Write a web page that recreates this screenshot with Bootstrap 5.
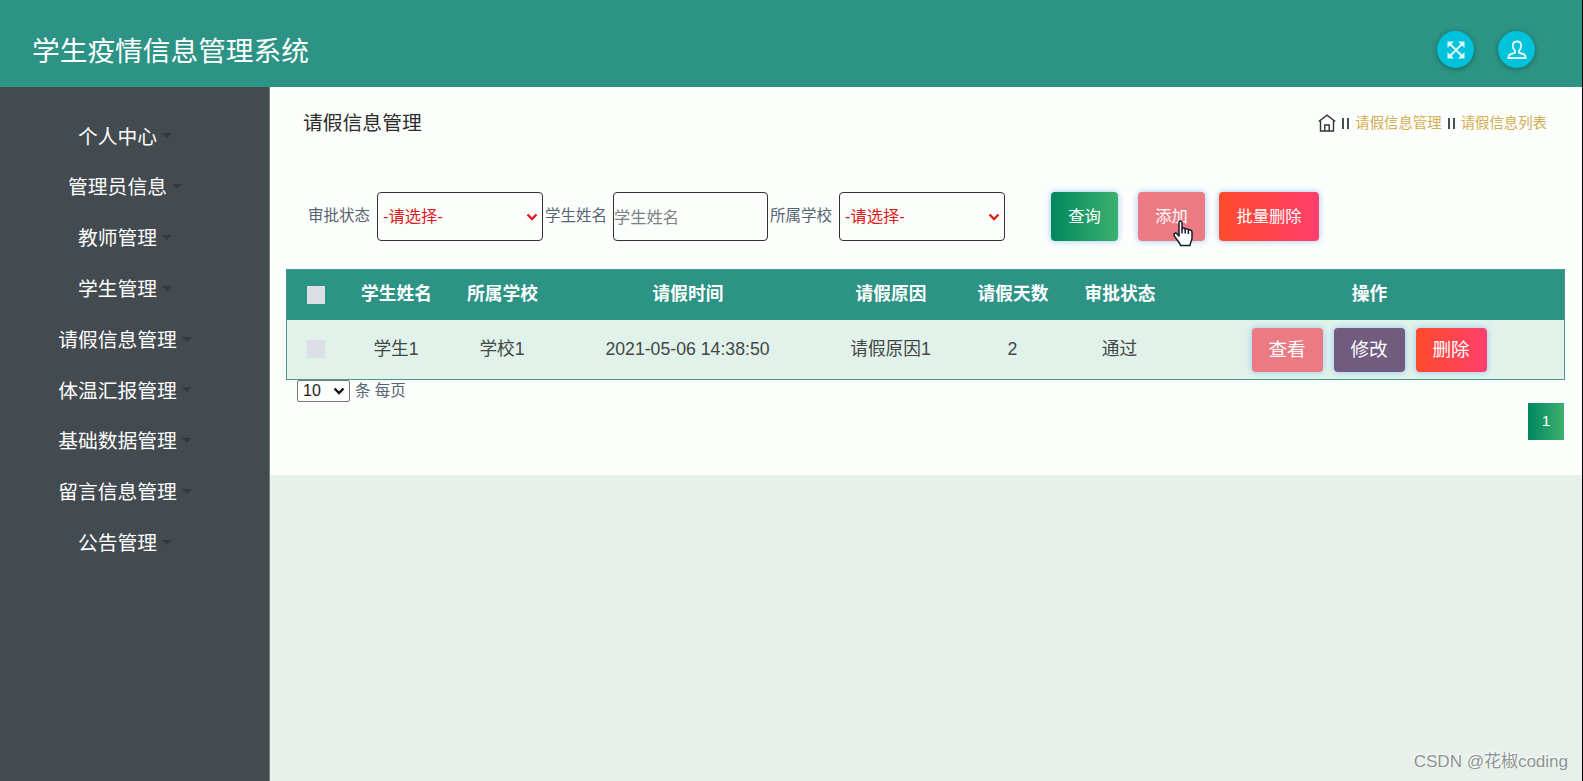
<!DOCTYPE html>
<html lang="zh-CN">
<head>
    <meta charset="UTF-8">
    <title>学生疫情信息管理系统</title>
    <meta name="viewport" content="width=device-width, initial-scale=1.0">
    <link rel="stylesheet" href="https://cdn.jsdelivr.net/npm/bootstrap@5.3.3/dist/css/bootstrap.min.css">
    <style>
        body {
            font-family: "Liberation Sans", "Noto Sans CJK SC", sans-serif;
            font-size: 15.5px;
            line-height: 1.2;
            color: #566472;
            background: #e7f0ea;
            border-right: 1px solid #000;
            height: 781px;
            overflow: hidden;
        }
        .top-bar { height: 87px; background: #2c9385; padding: 12px 47px 0 32px; }
        .site-title { font-size: 27.7px; padding-top: 4px; }
        .round-btn {
            width: 37px;
            height: 37px;
            background: #00c2da;
            box-shadow: 0 1px 5px rgba(0, 0, 0, .35);
        }
        .side-menu {
            width: 270px;
            background: #434a50;
            border-right: 1px solid #777d80;
            padding: 25px 19px 0 0;
        }
        .side-menu a {
            height: 50.8px;
            font-size: 19.8px;
            color: #fff;
            gap: 5px;
        }
        .side-menu a::after {
            content: "";
            border: 5.5px solid transparent;
            border-top-color: #313a39;
            border-bottom: 0;
            margin-top: -3px;
        }
        .panel-box { height: 388px; background: #fcfefb; }
        .head-row { height: 73px; padding: 0 35px 0 33px; }
        .page-name { font-size: 19.8px; color: #2b2b2b; padding-top: 1px; }
        .crumbs { font-size: 14.4px; color: #333; gap: 6px; }
        .crumbs a { color: #d3ae56; }
        .crumbs svg { margin-bottom: 2px; }
        .sep { width: 7px; height: 11px; border: solid #435158; border-width: 0 2px; }
        .search-row { height: 49px; margin: 32px 0 28px 38px; }
        .search-row label { width: 62px; white-space: nowrap; }
        .search-row .field + label { margin-left: 2px; }
        .field {
            height: 49px;
            border: 1.5px solid #333;
            border-radius: 4px;
            font-size: 16.3px;
            background: #fcfefb;
        }
        .pick { width: 166px; padding: 1px 4px 0 5px; margin-left: 7px; color: #dc1b1b; }
        .name-input { width: 155px; padding: 1px 0 0; margin-left: 6px; }
        .name-input::placeholder { color: #7b8083; opacity: 1; }
        .act {
            color: #fff;
            border: 0;
            border-radius: 4px;
            padding: 0;
            box-shadow: 0 0 6px rgba(120, 180, 250, .75);
        }
        .act:hover { color: #fff; }
        .search-row .act { width: 67px; height: 49px; font-size: 16.3px; margin-left: 46px; }
        .search-row .act.add-btn { margin-left: 20px; }
        .search-row .act.act-wide { width: 100px; margin-left: 14px; }
        .green { background: linear-gradient(90deg, #00875f, #3cb06e); }
        .pink { background: #ec7a82; }
        .purple { background: #715c80; }
        .red { background: linear-gradient(90deg, #ff4b2b, #ff3f6c); }
        .leave-table {
            width: 1279px;
            table-layout: fixed;
            margin-left: 16px;
            border: 1px solid #4a978d;
            border-collapse: separate;
            border-spacing: 0;
            text-align: center;
            font-size: 17.7px;
            color: #434746;
        }
        .leave-table th { height: 50px; background: #2c9385; color: #fff; padding: 0 1px 0 0; }
        .leave-table td { height: 59px; background: #e1f2ea; padding: 0 2px 0 0; }
        .leave-table th:first-child, .leave-table td:first-child { padding: 0 0 2px; }
        .tick { width: 18px; height: 18px; background: #dce0e6; }
        .row-act { gap: 11px; }
        .row-act .act { width: 71px; height: 44px; font-size: 18.6px; }
        .per-page { padding-left: 27px; gap: 5px; }
        .page-size {
            width: 53px;
            height: 22px;
            border: 1px solid #777;
            border-radius: 2px;
            font-size: 16px;
            color: #222;
            padding: 0 4px 0 5px;
        }
        .page-no { width: 36px; height: 37px; margin: 1px 18px 0 0; color: #fff; }
        .hand { position: absolute; left: 35px; top: 28px; }
        .watermark {
            position: absolute;
            right: 15px;
            bottom: 9px;
            font-size: 17px;
            color: #8f9392;
            text-shadow: -1px -1px 0 #fff;
        }
    </style>
    <script src="https://cdn.jsdelivr.net/npm/bootstrap@5.3.3/dist/js/bootstrap.bundle.min.js"></script>
</head>
<body class="d-flex flex-column">
<header class="top-bar d-flex align-items-center justify-content-between">
    <div class="site-title text-white">学生疫情信息管理系统</div>
    <div class="d-flex gap-4">
        <a class="round-btn rounded-circle d-flex align-items-center justify-content-center" href="#">
            <svg width="18" height="18" viewBox="0 0 18 18"><path d="M3 3l12 12M15 3L3 15" stroke="#dff8fb" stroke-width="2"/><path d="M.5.5h6.500L5 2.500 2.500 5l-2 2zM17.500.5H11l2 2L15.500 5l2 2zM.5 17.500V11l2 2L5 15.500l2 2zM17.500 17.500V11l-2 2-2.500 2.500-2 2z" fill="#dff8fb"/></svg>
        </a>
        <a class="round-btn rounded-circle d-flex align-items-center justify-content-center" href="#">
            <svg width="20" height="20" viewBox="0 0 20 20" fill="none" stroke="#dff8fb" stroke-width="1.9"><path d="M8 11C6.500 9.500 5.800 7.800 5.800 5.800 5.800 3 7.300 1.500 10 1.500s4.200 1.500 4.200 4.300c0 2-.7 3.700-2.200 5.200v1.600l5 1.900c1.200.5 1.600 1.500 1.700 3.500H1.300c.1-2 .5-3 1.700-3.500l5-1.900z"/></svg>
        </a>
    </div>
</header>
<div class="d-flex flex-grow-1">
    <nav class="side-menu d-flex flex-column flex-shrink-0">
        <a class="d-flex align-items-center justify-content-center text-decoration-none" href="#">个人中心</a>
        <a class="d-flex align-items-center justify-content-center text-decoration-none" href="#">管理员信息</a>
        <a class="d-flex align-items-center justify-content-center text-decoration-none" href="#">教师管理</a>
        <a class="d-flex align-items-center justify-content-center text-decoration-none" href="#">学生管理</a>
        <a class="d-flex align-items-center justify-content-center text-decoration-none" href="#">请假信息管理</a>
        <a class="d-flex align-items-center justify-content-center text-decoration-none" href="#">体温汇报管理</a>
        <a class="d-flex align-items-center justify-content-center text-decoration-none" href="#">基础数据管理</a>
        <a class="d-flex align-items-center justify-content-center text-decoration-none" href="#">留言信息管理</a>
        <a class="d-flex align-items-center justify-content-center text-decoration-none" href="#">公告管理</a>
    </nav>
    <main class="flex-grow-1">
        <div class="panel-box">
            <div class="head-row d-flex align-items-center justify-content-between">
                <div class="page-name">请假信息管理</div>
                <div class="crumbs d-flex align-items-center">
                    <svg width="18" height="18" viewBox="0 0 18 18" fill="none" stroke="#333" stroke-width="1.4"><path d="M.7 7.500L9 1.200l8.300 6.300M2.500 6.200v10.800h13V6.200M6.800 17v-6h4.400v6"/></svg>
                    <span class="sep"></span>
                    <a class="text-decoration-none" href="#">请假信息管理</a>
                    <span class="sep"></span>
                    <a class="text-decoration-none" href="#">请假信息列表</a>
                </div>
            </div>
            <form class="search-row d-flex align-items-center">
                <label>审批状态</label>
                <div class="field pick d-flex align-items-center justify-content-between">
                    <span>-请选择-</span>
                    <svg width="12" height="8" viewBox="0 0 12 8" fill="none" stroke="#e31b1b" stroke-width="2.400"><path d="M1.500 1.500L6 6l4.500-4.500"/></svg>
                </div>
                <label>学生姓名</label>
                <input type="text" class="field name-input" placeholder="学生姓名">
                <label>所属学校</label>
                <div class="field pick d-flex align-items-center justify-content-between">
                    <span>-请选择-</span>
                    <svg width="12" height="8" viewBox="0 0 12 8" fill="none" stroke="#e31b1b" stroke-width="2.400"><path d="M1.500 1.500L6 6l4.500-4.500"/></svg>
                </div>
                <button type="button" class="btn act green">查询</button>
                <button type="button" class="btn act add-btn pink position-relative">添加
                    <svg class="hand" width="20" height="27" viewBox="0 0 20 27" fill="#fff" stroke="#171a2b" stroke-width="1.500" stroke-linejoin="round"><path d="M6 16V2.500C6 .4 9 .4 9 2.500V9c.3-1.300 3-1.300 3.200.5.600-1.200 3-1 3.200.8.800-1 3.600-.6 3.600 1.700v6c0 3-1.800 4-2 7.500H7.500C7 22 2 18.500 1 15c-.3-2 2-2.500 3.200-1z"/><path d="M9 9v4.500M12.200 9.500v4M15.400 10.500v3.500"/></svg>
                </button>
                <button type="button" class="btn act act-wide red">批量删除</button>
            </form>
            <table class="leave-table">
                <colgroup>
                    <col width="57"><col width="106"><col width="106"><col width="265"><col width="141"><col width="103"><col width="111"><col>
                </colgroup>
                <thead>
                <tr>
                    <th><span class="tick d-inline-block align-middle"></span></th>
                    <th>学生姓名</th>
                    <th>所属学校</th>
                    <th>请假时间</th>
                    <th>请假原因</th>
                    <th>请假天数</th>
                    <th>审批状态</th>
                    <th>操作</th>
                </tr>
                </thead>
                <tbody>
                <tr>
                    <td><span class="tick d-inline-block align-middle"></span></td>
                    <td>学生1</td>
                    <td>学校1</td>
                    <td>2021-05-06 14:38:50</td>
                    <td>请假原因1</td>
                    <td>2</td>
                    <td>通过</td>
                    <td>
                        <div class="row-act d-flex justify-content-center">
                            <button type="button" class="btn act pink">查看</button>
                            <button type="button" class="btn act purple">修改</button>
                            <button type="button" class="btn act red">删除</button>
                        </div>
                    </td>
                </tr>
                </tbody>
            </table>
            <div class="per-page d-flex align-items-center">
                <div class="page-size d-flex align-items-center justify-content-between">
                    <span>10</span>
                    <svg width="12" height="8" viewBox="0 0 12 8" fill="none" stroke="#111" stroke-width="2.400"><path d="M1.500 1.500L6 6l4.500-4.500"/></svg>
                </div>
                <span>条 每页</span>
            </div>
            <div class="page-no green d-flex align-items-center justify-content-center ms-auto">1</div>
        </div>
    </main>
</div>
<div class="watermark">CSDN @花椒coding</div>
</body>
</html>
